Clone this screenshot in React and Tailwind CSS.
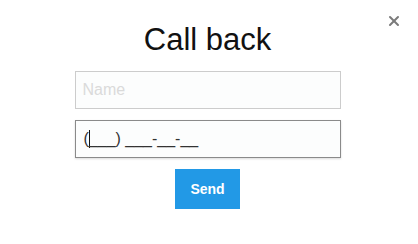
import { X } from "lucide-react";

const CallbackForm = () => {
  return (
    <div className="relative w-[418px] h-[244px] bg-white font-['Liberation_Sans',Arial,sans-serif]">
      <button
        type="button"
        className="absolute top-[13px] right-[16px] text-[#7b7b7b] flex items-center justify-center"
      >
        <X className="size-[16px]" strokeWidth={3} />
      </button>

      <div className="w-[415px] flex flex-col items-center pt-[24px]">
        <h2 className="text-[31px] leading-none text-[#111]">Call back</h2>

        <form className="w-[266px] mt-[16px] flex flex-col items-center">
          <input
            type="text"
            placeholder="Name"
            className="w-full h-[38px] border border-[#cccccc] bg-[#fcfdfd] px-[7px] text-[16px] text-[#333] placeholder:text-[#dadada] outline-none"
          />
          <div className="w-full h-[38px] mt-[11px] border border-[#8a8a8a] bg-[#fcfdfd] px-[8px] flex items-center text-[16px] text-[#333] shadow-[0_1px_2px_rgba(0,0,0,0.15)]">
            <span>(</span>
            <span className="w-px h-[18px] bg-[#111] -mr-px" />
            <span>___) ___-__-__</span>
          </div>
          <button
            type="button"
            className="mt-[11px] w-[65px] h-[40px] bg-[#2299e6] text-white text-[14px] font-bold"
          >
            Send
          </button>
        </form>
      </div>
    </div>
  );
};

export default CallbackForm;
